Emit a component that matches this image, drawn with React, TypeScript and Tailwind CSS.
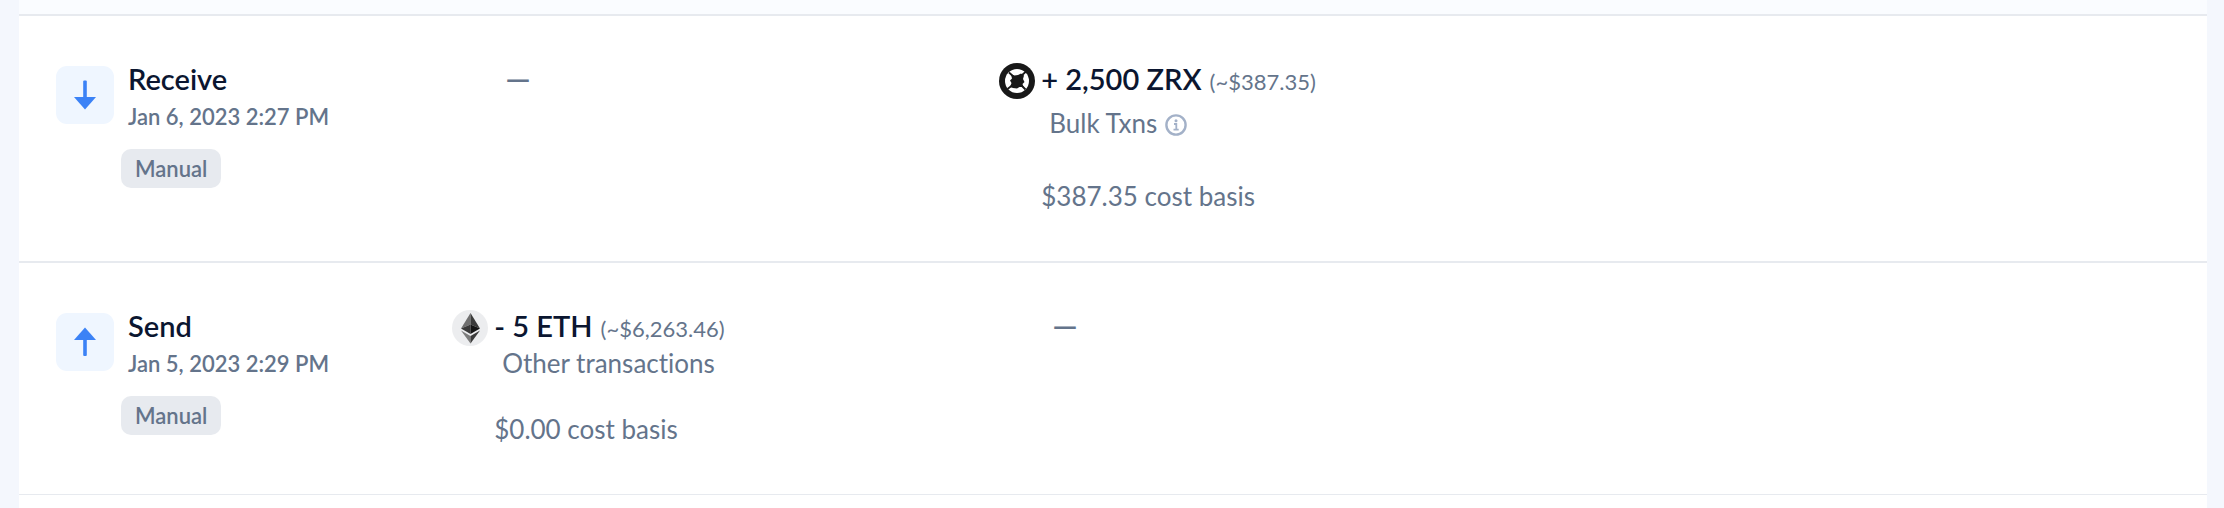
import React from "react";

type Asset = {
  icon: React.ReactNode;
  amount: string;
  value: string;
  label: string;
  hasInfo?: boolean;
  costBasis: string;
};

type Transaction = {
  kind: "Receive" | "Send";
  date: string;
  sent?: Asset;
  received?: Asset;
};

function ArrowIcon({ up }: { up: boolean }) {
  return (
    <svg viewBox="0 0 58 58" className="size-[58px]" aria-hidden="true">
      <rect width="58" height="58" rx="11" fill="#eff6ff" />
      {up ? (
        <g fill="#3b82f6">
          <path d="M29 14.500 L40 27 H18 Z" />
          <rect x="27.200" y="25" width="3.600" height="18" rx="1" />
        </g>
      ) : (
        <g fill="#3b82f6">
          <path d="M29 43.500 L40 31 H18 Z" />
          <rect x="27.200" y="14.500" width="3.600" height="18" rx="1" />
        </g>
      )}
    </svg>
  );
}

function ZrxIcon() {
  return (
    <svg viewBox="0 0 36 36" className="size-9" aria-hidden="true">
      <circle cx="18" cy="18" r="18" fill="#181818" />
      <circle cx="18" cy="18" r="12" fill="#fff" />
      <path
        d="M12 11.500 L15.500 12.500 L19 12 L22 10.500 L25 12.500 L24 16 L25.500 19 L23.500 21 L24.500 24 L20.500 24 L18 25.500 L14 25 L11 24 L12.500 20 L11 17.500 L13 15.500 Z"
        fill="#181818"
      />
      <path d="M10 9.500 L15 14 M27 8.500 L21 14 M26.500 26.500 L21.500 21.500 M8.500 26 L15 21" stroke="#181818" strokeWidth="1.800" />
    </svg>
  );
}

function EthIcon() {
  return (
    <svg viewBox="0 0 36 36" className="size-9" aria-hidden="true">
      <circle cx="18" cy="18" r="18" fill="#ecedef" />
      <path d="M18.500 3 L9 18.500 L18.500 14.500 Z" fill="#707070" />
      <path d="M18.500 3 L28 18.500 L18.500 14.500 Z" fill="#3b3b3b" />
      <path d="M9 18.500 L18.500 14.500 V24 Z" fill="#3a3a3a" />
      <path d="M28 18.500 L18.500 14.500 V24 Z" fill="#151515" />
      <path d="M9 20.500 L18.500 26 V33.500 Z" fill="#7c7c7c" />
      <path d="M28 20.500 L18.500 26 V33.500 Z" fill="#3b3b3b" />
    </svg>
  );
}

function InfoIcon() {
  return (
    <svg viewBox="0 0 22 22" className="size-[22px]" fill="none" aria-hidden="true">
      <circle cx="11" cy="11" r="9.600" stroke="#a3b1c8" strokeWidth="2.400" />
      <circle cx="11" cy="6.800" r="1.500" fill="#a3b1c8" />
      <path d="M9 10 H11.300 V15.500 M8.500 15.600 H13.700" stroke="#a3b1c8" strokeWidth="1.800" />
    </svg>
  );
}

function AssetCell({ asset }: { asset?: Asset }) {
  if (!asset) {
    return (
      <td className="pt-[45px] pl-[53px] align-top">
        <span className="block text-[32px] leading-9 font-semibold">—</span>
      </td>
    );
  }
  return (
    <td className="pt-[45px] pb-[49px] align-top">
      <div className="flex gap-1.5">
        <div className="flex h-10 shrink-0 items-center">{asset.icon}</div>
        <div>
          <div className="flex items-baseline gap-2 leading-9 whitespace-nowrap">
            <span className="text-[29px] font-semibold text-[#0b1630]">{asset.amount}</span>
            <span className="text-[22px]">{asset.value}</span>
          </div>
          <div className={asset.hasInfo ? "flex h-[46px] items-center gap-2 pl-2" : "flex h-8 items-center pl-2"}>
            <span className="text-[26px] leading-8">{asset.label}</span>
            {asset.hasInfo && (
              <button type="button" aria-label="About bulk transactions" className="pt-1">
                <InfoIcon />
              </button>
            )}
          </div>
          <div className="mt-[34px] text-[26px] leading-8">{asset.costBasis} cost basis</div>
        </div>
      </div>
    </td>
  );
}

const transactions: Transaction[] = [
  {
    kind: "Receive",
    date: "Jan 6, 2023 2:27 PM",
    received: {
      icon: <ZrxIcon />,
      amount: "+ 2,500 ZRX",
      value: "(~$387.35)",
      label: "Bulk Txns",
      hasInfo: true,
      costBasis: "$387.35",
    },
  },
  {
    kind: "Send",
    date: "Jan 5, 2023 2:29 PM",
    sent: {
      icon: <EthIcon />,
      amount: "- 5 ETH",
      value: "(~$6,263.46)",
      label: "Other transactions",
      costBasis: "$0.00",
    },
  },
];

export default function App() {
  return (
    <main className="min-h-screen bg-[#f4f7fd] pr-[17px] pl-[19px] font-['Lato','Noto_Sans',sans-serif] text-[#64748b] [font-variant-ligatures:none]">
      <div className="min-h-screen bg-white">
        <div className="h-3.5 bg-[#fafcff]" />
        <table className="w-full table-fixed border-collapse text-left">
          <colgroup>
            <col className="w-[19.8%]" />
            <col className="w-1/4" />
            <col className="w-1/4" />
            <col />
          </colgroup>
          <tbody>
            {transactions.map((tx) => (
              <tr key={tx.date} className="border-t-2 border-b border-[#e7eaef]">
                <td className="pt-[45px] pl-[37px] align-top">
                  <div className="flex gap-[7px]">
                    <div className="shrink-0 pt-[5px]">
                      <ArrowIcon up={tx.kind === "Send"} />
                    </div>
                    <div>
                      <div className="pl-[7px] text-[29px] leading-9 font-semibold text-[#0b1630]">{tx.kind}</div>
                      <div className="mt-1 pl-[7px] text-[22px] leading-8 font-semibold whitespace-nowrap">{tx.date}</div>
                      <span className="mt-4 inline-block rounded-[10px] bg-[#e7eaef] px-3.5 text-[22px] leading-[39px] font-semibold">
                        Manual
                      </span>
                    </div>
                  </div>
                </td>
                <AssetCell asset={tx.sent} />
                <AssetCell asset={tx.received} />
                <td />
              </tr>
            ))}
          </tbody>
        </table>
      </div>
    </main>
  );
}
